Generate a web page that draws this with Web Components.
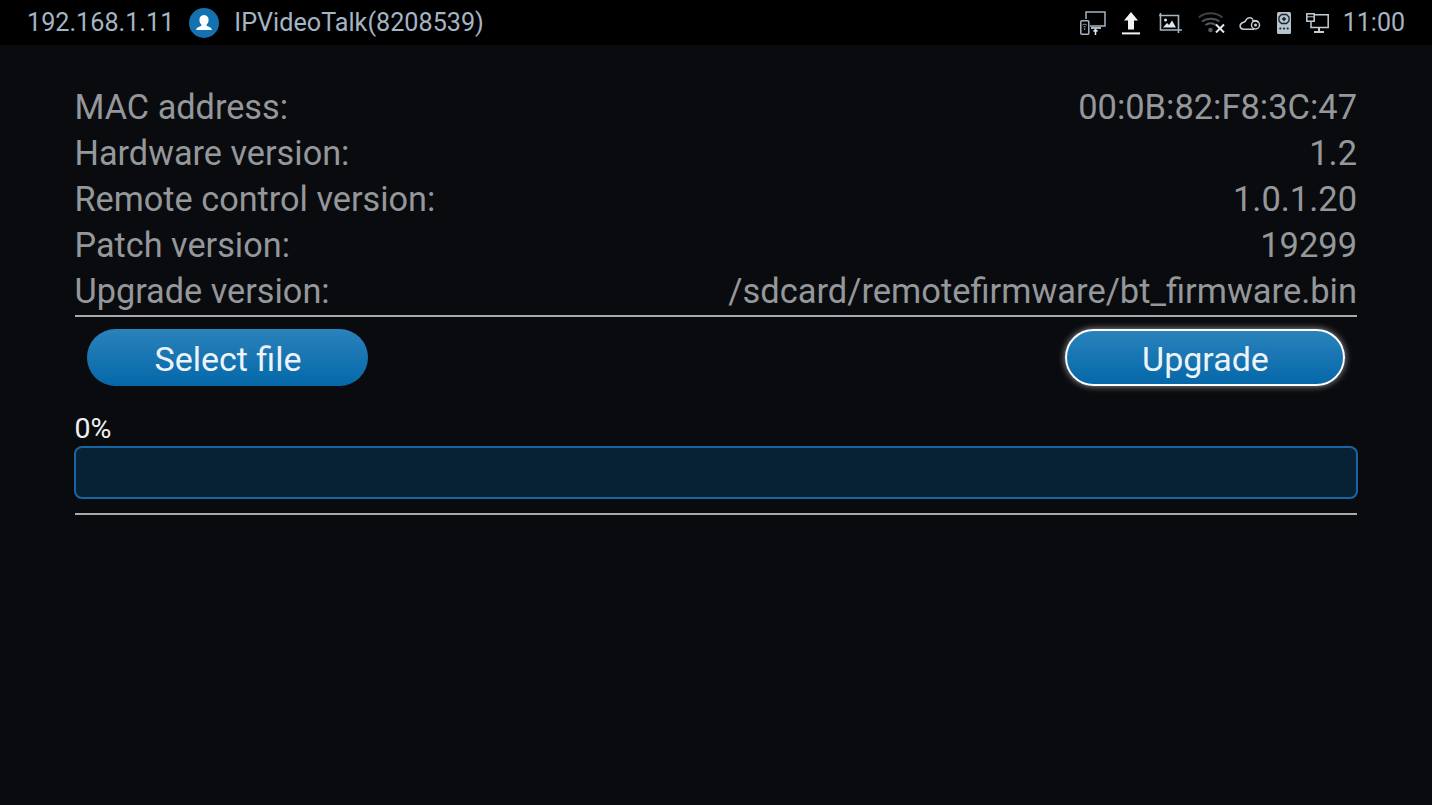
<!DOCTYPE html>
<html><head><meta charset="utf-8"><style>
html,body{margin:0;padding:0;background:#0a0b0f;width:1432px;height:805px;overflow:hidden;font-family:Roboto,sans-serif}
</style></head><body>
<status-bar></status-bar>
<main-panel>
<info-row label="MAC address:" value="00:0B:82:F8:3C:47"></info-row>
<info-row label="Hardware version:" value="1.2"></info-row>
<info-row label="Remote control version:" value="1.0.1.20"></info-row>
<info-row label="Patch version:" value="19299"></info-row>
<info-row label="Upgrade version:" value="/sdcard/remotefirmware/bt_firmware.bin"></info-row>
</main-panel>
<script>
class StatusBar extends HTMLElement{constructor(){super();this.attachShadow({mode:'open'}).innerHTML=`<style>
:host{display:flex;align-items:center;height:45px;background:#000;color:#a4b5c4;font:25.2px/45px Roboto,sans-serif;padding:0 27px;box-sizing:border-box;width:1432px}
.av{margin:0 15px 0 15px;width:30px;height:30px;flex:none}
.right{margin-left:auto;display:flex;align-items:center}
svg{display:block;flex:none}
.t{margin-left:13.500px;font-size:25px}
</style>
<span>192.168.1.11</span>
<svg class="av" viewBox="0 0 30 30"><circle cx="15" cy="15" r="15" fill="#1273b0"/><path d="M15 7c3 0 4.600 2.200 4.600 5 0 2-.9 3.500-2 4.500v1.200c1.500 1 4.700 1 5.400 4.300H7c.7-3.300 3.900-3.300 5.400-4.300v-1.200c-1.100-1-2-2.500-2-4.500 0-2.800 1.600-5 4.600-5z" fill="#fff"/></svg>
<span>IPVideoTalk(8208539)</span>
<div class="right">
<svg width="26" height="24" viewBox="0 0 26 24" style="margin:1px 16px 0 0" fill="none" stroke="#a4b5c4" stroke-width="1.500"><path d="M6 8V1h19v14H10"/><rect x=".8" y="9.800" width="8" height="13.400" rx="1" fill="#000"/><path d="M2.500 14c1.300-1 2.900-1 4.200 0M3.500 16c.7-.5 1.500-.5 2.200 0" stroke-width="1"/><circle cx="4.600" cy="18" r=".8" fill="#a4b5c4" stroke="none"/><path d="M11 17h10" stroke-width="2" stroke="#a4b5c4"/><path d="M15.500 24v-6M13.500 20.500l2-2 2 2" stroke="#dfe6ec"/></svg>
<svg width="18" height="24" viewBox="0 0 18 24" style="margin:0 19px 0 0"><path d="M9 1l7 8.500h-4V18.500H6V9.500H2z" fill="#f2f4f6"/><rect x="0" y="21.400" width="18" height="2" fill="#f2f4f6"/></svg>
<svg width="23" height="20" viewBox="0 0 23 20" style="margin:0 16px 0 0" fill="none" stroke="#a4b5c4" stroke-width="1.600"><path d="M1.500 0v17h18V2.500H0M19.500 17v3M19.500 17H23"/><circle cx="6.500" cy="7" r="1.500" fill="#dfe6ec" stroke="none"/><path d="M4 14.500l4-4.500 2 2 3-4.500 4 7z" fill="#dfe6ec" stroke="none"/></svg>
<svg width="27" height="21" viewBox="0 0 27 21" style="margin:0 14px 0 0" fill="none"><path d="M.8 5.500C7-.2 18-.2 24.500 5.500" stroke="#3c4248" stroke-width="2"/><path d="M4 9.500c4.500-3.700 13-3.700 17.500 0" stroke="#4a5157" stroke-width="2"/><path d="M7.500 13c3-2.200 7-2.200 10.500 0" stroke="#565d63" stroke-width="2"/><circle cx="12.500" cy="18" r="2.300" fill="#565d63"/><path d="M18 12.500l8 8M26 12.500l-8 8" stroke="#e4eaee" stroke-width="2"/></svg>
<svg width="22" height="13" viewBox="0 0 22 13" style="margin:2px 16px 0 0" fill="none" stroke="#c3ced6" stroke-width="1.500"><path d="M14 2.500C12.500.2 8.500.2 7 3 6.500 5 6 4.800 3.800 5.500 0 7 .3 12.200 4.500 12.200H15"/><path d="M13 4c3-1 5.500 0 6.500 1.500"/><circle cx="16.500" cy="8" r="4"/><circle cx="16.500" cy="8" r="1.500" fill="#c3ced6" stroke="none"/></svg>
<svg width="14" height="22" viewBox="0 0 14 22" style="margin:0 15px 0 0"><rect width="14" height="22" rx="1.500" fill="#b3c3d0"/><path d="M4.500 2.500h5l2.500 2.500v4l-2.500 2.500h-5L2 9V5z" fill="none" stroke="#1c2228" stroke-width="1.300"/><path d="M7 4.800l2.300 2.200L7 9.200 4.700 7z" fill="#1c2228"/><g fill="#1c2228"><circle cx="3.300" cy="16.500" r="1.100"/><circle cx="7" cy="16.500" r="1.100"/><circle cx="10.700" cy="16.500" r="1.100"/></g></svg>
<svg width="23" height="20" viewBox="0 0 23 20" fill="none" stroke="#c3ced6" stroke-width="1.500"><path d="M8 1.800h14.200v12.700H5V9"/><rect x=".8" y=".8" width="7.400" height="7.400" fill="#000"/><path d="M.8 3.800h7.400" stroke-width="1"/><path d="M13 14.500V18.500M8 19h10" stroke-width="2"/></svg>
<span class="t">11:00</span>
</div>`}}
customElements.define('status-bar',StatusBar);

class MainPanel extends HTMLElement{constructor(){super();this.attachShadow({mode:'open'}).innerHTML=`<style>
:host{display:block;width:1282px;margin:38.600px 0 0 75px;box-sizing:border-box}
.list{display:flex;flex-direction:column}
hr{border:0;height:2px;background:#a9a9a9;margin:0}
.btns{display:flex;justify-content:space-between;padding:12px 12px 0 12px}
.pct{font:28.500px/34px Roboto,sans-serif;color:#f0f0f0;margin:26px 0 0 -.5px;height:34px}
</style>
<div class="list"><slot></slot></div>
<hr style="margin-top:.400px">
<div class="btns"><pill-button>Select file</pill-button><pill-button focused>Upgrade</pill-button></div>
<div class="pct">0%</div>
<progress-track></progress-track>
<hr style="margin-top:14px">`}}
customElements.define('main-panel',MainPanel);

class InfoRow extends HTMLElement{constructor(){super();this.attachShadow({mode:'open'}).innerHTML=`<style>
:host{display:flex;justify-content:space-between;height:46.200px;font:34.450px/46px Roboto,sans-serif;color:#95989a;white-space:nowrap}
#l{font-size:34.250px;margin-left:-.5px}
</style><span id="l"></span><span id="v"></span>`}
connectedCallback(){this.shadowRoot.getElementById('l').textContent=this.getAttribute('label');this.shadowRoot.getElementById('v').textContent=this.getAttribute('value')}}
customElements.define('info-row',InfoRow);

class PillButton extends HTMLElement{constructor(){super();this.attachShadow({mode:'open'}).innerHTML=`<style>
:host{display:flex;align-items:center;justify-content:center;box-sizing:border-box;width:281px;height:57px;padding:4px 0 0 1px;border-radius:29px;background:linear-gradient(#2a82bb,#0568a9);color:#eef3f7;font:34px/40px Roboto,sans-serif}
:host([focused]){width:280px;border:2px solid #fff;box-shadow:0 0 7px rgba(255,255,255,.6)}
</style><slot></slot>`}}
customElements.define('pill-button',PillButton);

class ProgressTrack extends HTMLElement{constructor(){super();this.attachShadow({mode:'open'}).innerHTML=`<style>
:host{display:block;box-sizing:border-box;height:53px;margin:0 -1px;border:2px solid #1a64a4;border-radius:8px;background:#072135}
</style>`}}
customElements.define('progress-track',ProgressTrack);
</script>
</body></html>
